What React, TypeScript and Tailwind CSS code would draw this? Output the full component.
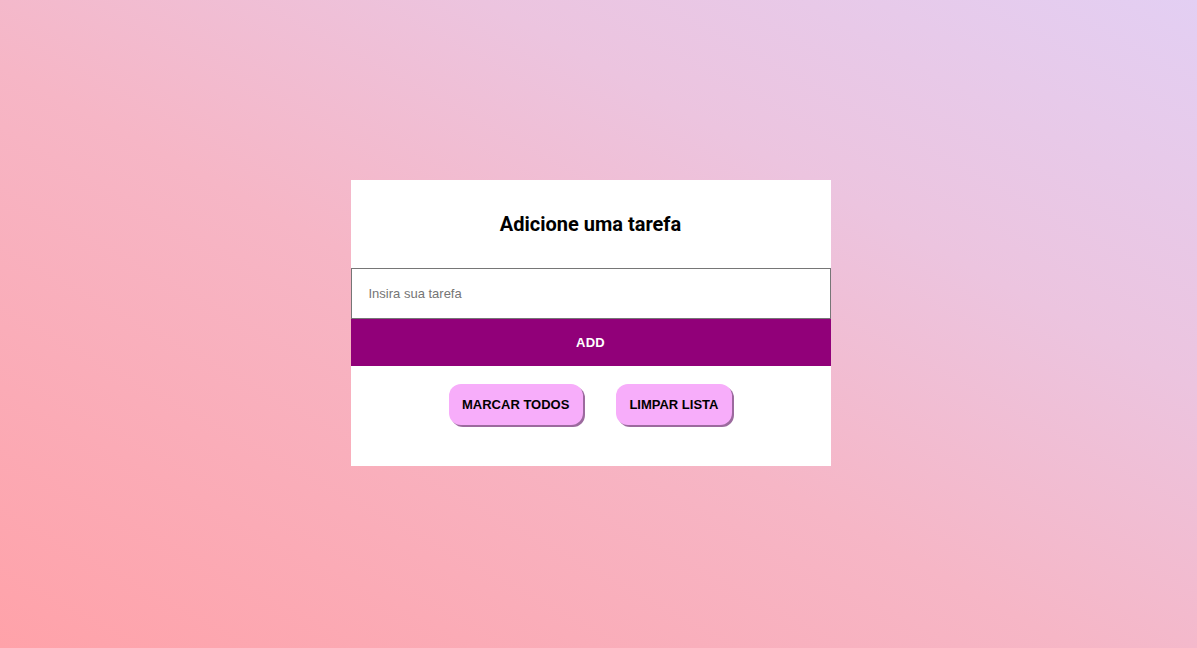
import React from "react";

export default function App() {
  return (
    <div className="min-h-screen w-full flex items-center justify-center pr-[16px] pb-[2px] bg-[linear-gradient(to_top_right,#ffa2a9_0%,#f6b6c6_45%,#ecc4df_70%,#e3cff3_100%)]">
      <div className="w-[480px] bg-white flex flex-col pt-[30px] pb-[41px]">
        <h2 className="text-center text-[20px] leading-[28px] font-bold text-black font-['Roboto',sans-serif]">
          Adicione uma tarefa
        </h2>

        <input
          type="text"
          placeholder="Insira sua tarefa"
          className="mt-[30px] h-[51px] w-full border border-[#767676] px-[17px] text-[13px] text-black placeholder:text-[#757575] font-['Liberation_Sans',Arial,sans-serif] outline-none"
        />
        <button className="h-[47px] w-full bg-[#910079] text-white text-[13px] font-bold tracking-[0.3px] font-['Liberation_Sans',Arial,sans-serif]">
          ADD
        </button>

        <div className="mt-[18px] flex justify-center gap-[33px]">
          <button className="h-[41px] pl-[13px] pr-[13.5px] rounded-[12px] bg-[#f7adfa] text-black text-[13px] font-bold font-['Liberation_Sans',Arial,sans-serif] shadow-[2px_2px_0_#9c6a9e]">
            MARCAR TODOS
          </button>
          <button className="h-[41px] px-[13.5px] rounded-[12px] bg-[#f7adfa] text-black text-[13px] font-bold font-['Liberation_Sans',Arial,sans-serif] shadow-[2px_2px_0_#9c6a9e]">
            LIMPAR LISTA
          </button>
        </div>
      </div>
    </div>
  );
}
